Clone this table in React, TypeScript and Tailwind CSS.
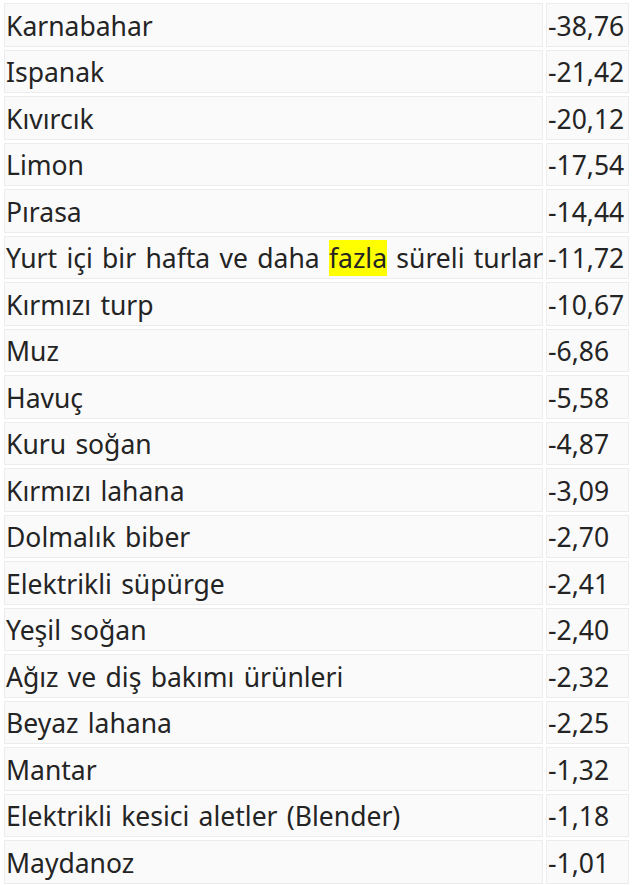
import React from "react";

const rows: [string, string][] = [
  ["Karnabahar", "-38,76"],
  ["Ispanak", "-21,42"],
  ["Kıvırcık", "-20,12"],
  ["Limon", "-17,54"],
  ["Pırasa", "-14,44"],
  ["Yurt içi bir hafta ve daha fazla süreli turlar", "-11,72"],
  ["Kırmızı turp", "-10,67"],
  ["Muz", "-6,86"],
  ["Havuç", "-5,58"],
  ["Kuru soğan", "-4,87"],
  ["Kırmızı lahana", "-3,09"],
  ["Dolmalık biber", "-2,70"],
  ["Elektrikli süpürge", "-2,41"],
  ["Yeşil soğan", "-2,40"],
  ["Ağız ve diş bakımı ürünleri", "-2,32"],
  ["Beyaz lahana", "-2,25"],
  ["Mantar", "-1,32"],
  ["Elektrikli kesici aletler (Blender)", "-1,18"],
  ["Maydanoz", "-1,01"],
];

function Label({ text }: { text: string }) {
  if (!text.includes("fazla")) return <span>{text}</span>;
  const [a, b] = text.split("fazla");
  return (
    <span>
      {a}
      <span className="bg-[#ffff00]">fazla</span>
      {b}
    </span>
  );
}

export default function App() {
  return (
    <div className="w-[640px] h-[885px] overflow-hidden bg-white pl-[4px] pt-[3px] font-['Noto_Sans',sans-serif] text-[26.5px] text-[#242424] [word-spacing:2.4px]">
      <div className="grid grid-cols-[539px_83px] auto-rows-[43.5px] gap-x-[3px] gap-y-[3px]">
        {rows.map(([name, val]) => (
          <React.Fragment key={name}>
            <div className="flex items-center whitespace-nowrap border border-[#ececec] bg-[#fafafa] pl-[1px] pt-[2px] leading-none">
              <Label text={name} />
            </div>
            <div className="flex items-center whitespace-nowrap border border-[#ececec] bg-[#fafafa] pl-[1px] pt-[2px] leading-none">
              <span>{val}</span>
            </div>
          </React.Fragment>
        ))}
      </div>
    </div>
  );
}
